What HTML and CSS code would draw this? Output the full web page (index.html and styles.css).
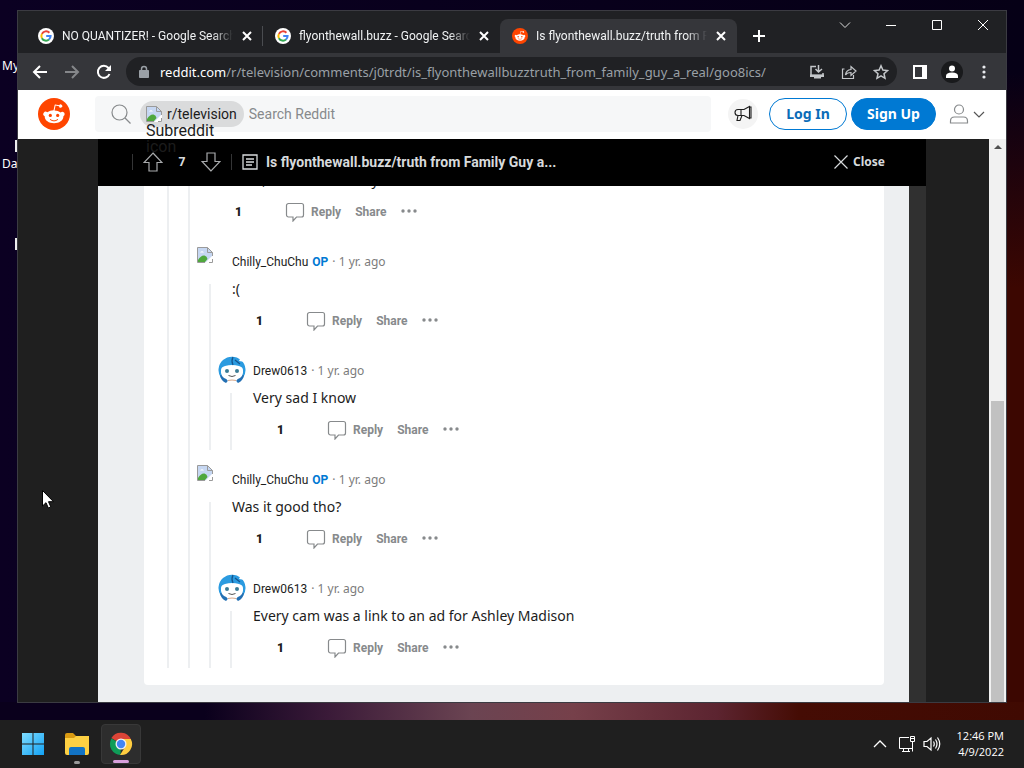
FILE: index.html
```html
<!DOCTYPE html>
<html lang="en">
<head>
    <meta charset="UTF-8">
    <meta name="viewport" content="width=device-width, initial-scale=1.0">
    <title>Desktop</title>
    <link rel="stylesheet" href="styles.css">
</head>
<body>
    <!-- shared icons -->
    <svg class="sprite" width="0" height="0" aria-hidden="true">
        <symbol id="google" viewBox="0 0 16 16">
            <circle cx="8" cy="8" r="8" fill="#fff"/>
            <g fill="none" stroke-width="2">
                <path d="M11.4 4.8A4.6 4.6 0 0 0 3.9 5.9" stroke="#ea4335"/>
                <path d="M3.9 5.9a4.6 4.6 0 0 0 0 4.3" stroke="#fbbc05"/>
                <path d="M3.9 10.2a4.6 4.6 0 0 0 7.1 1.3" stroke="#34a853"/>
                <path d="M11 11.5a4.6 4.6 0 0 0 1.6-3.4H8.2" stroke="#4285f4"/>
            </g>
        </symbol>
        <symbol id="reddit" viewBox="0 0 20 20">
            <circle cx="10" cy="10" r="10" fill="#ff4500"/>
            <path fill="#fff" d="M16.67 10a1.46 1.46 0 0 0-2.47-1 7.12 7.12 0 0 0-3.85-1.23l.65-3.12 2.14.45a1 1 0 1 0 .13-.61l-2.45-.49a.31.31 0 0 0-.37.24l-.74 3.47a7.14 7.14 0 0 0-3.9 1.23 1.46 1.46 0 1 0-1.61 2.39 2.87 2.87 0 0 0 0 .44c0 2.24 2.61 4.06 5.83 4.06s5.83-1.82 5.83-4.06a2.87 2.87 0 0 0 0-.44 1.46 1.46 0 0 0 .81-1.33z"/>
            <circle cx="7.7" cy="10.9" r="1" fill="#ff4500"/>
            <circle cx="12.3" cy="10.9" r="1" fill="#ff4500"/>
            <path fill="none" stroke="#ff4500" stroke-width=".6" stroke-linecap="round" d="M7.7 13.5a3.8 3.8 0 0 0 4.6 0"/>
        </symbol>
        <symbol id="cross" viewBox="0 0 10 10">
            <path d="M1 1l8 8M9 1L1 9" fill="none" stroke="currentColor"/>
        </symbol>
        <symbol id="broken" viewBox="0 0 16 16">
            <path d="M.5.5h10l5 5v5l-5 5H.5z" fill="#c6d7f2"/>
            <path d="M1 15V13q3-5 6.500-4.500Q10 9 10.500 12L8 15z" fill="#4fa83d"/>
            <path d="M3 5.500q2-2.500 4 0z" fill="#fff"/>
            <path d="M8 16l8-8v8z" fill="#fff"/>
            <path d="M8 15.500H.5V.5h10l5 5V9M10.500.5v5h5M12 15.500h3.500V12" fill="none" stroke="#9a9a9a"/>
        </symbol>
        <symbol id="bubble" viewBox="0 0 20 20">
            <path d="M3.500 1.500h13a2 2 0 0 1 2 2v9.500a2 2 0 0 1-2 2h-5L8 19v-4H3.500a2 2 0 0 1-2-2V3.500a2 2 0 0 1 2-2z" fill="none" stroke="#878a8c" stroke-width="1.200"/>
        </symbol>
        <symbol id="dots" viewBox="0 0 18 4">
            <g fill="#878a8c"><circle cx="3" cy="2" r="1.700"/><circle cx="9" cy="2" r="1.700"/><circle cx="15" cy="2" r="1.700"/></g>
        </symbol>
        <symbol id="snoo" viewBox="0 0 28 28">
            <path d="M3 22A13.500 13.500 0 1 1 25 22z" fill="#2b9be0"/>
            <path d="M2 19q1 6 6 8l2-2-5-6zM26 19q-1 6-6 8l-2-2 5-6z" fill="#2470b3"/>
            <path d="M9 28l1-4h8l1 4z" fill="#fff"/>
            <path d="M3 14q0-3 4-4 7-2 14 0 4 1 4 4v3q-1 7-11 7T3 17z" fill="#fff"/>
            <path d="M15 1q-2 4 0 8M17 4l5 4" stroke="#14568e" fill="none" stroke-width="1.300"/>
            <path d="M23 1l-2 4 6 1z" fill="#fff"/>
            <circle cx="9" cy="15" r="2" fill="#3a7c96"/>
            <circle cx="19" cy="15" r="2" fill="#3a7c96"/>
            <path d="M10.500 19.500q3.500 2 7 0" stroke="#555" fill="none"/>
            <path d="M10 24.500q4-1 8 0" stroke="#d8a88a" fill="none"/>
        </symbol>
        <symbol id="arrow" viewBox="0 0 20 20">
            <path d="M10 1l9 9.500h-5V19H6v-8.500H1z" fill="none" stroke="#a8aaac" stroke-width="1.200"/>
        </symbol>
    </svg>

    <main class="desktop">
        <span class="shortcut shortcut-my">My</span>
        <span class="shortcut shortcut-da">Da</span>
        <i class="chip chip-a"></i>
        <i class="chip chip-b"></i>

        <section class="window">
            <div class="tabstrip">
                <div class="tab">
                    <svg class="favicon"><use href="#google"/></svg>
                    <span class="tab-title">NO QUANTIZER! - Google Search</span>
                    <button class="tab-close" aria-label="Close tab"><svg><use href="#cross"/></svg></button>
                </div>
                <div class="tab">
                    <svg class="favicon"><use href="#google"/></svg>
                    <span class="tab-title">flyonthewall.buzz - Google Search</span>
                    <button class="tab-close" aria-label="Close tab"><svg><use href="#cross"/></svg></button>
                </div>
                <div class="tab active">
                    <svg class="favicon"><use href="#reddit"/></svg>
                    <span class="tab-title">Is flyonthewall.buzz/truth from F</span>
                    <button class="tab-close" aria-label="Close tab"><svg><use href="#cross"/></svg></button>
                </div>
                <button class="new-tab" aria-label="New tab"><svg width="12" height="12" viewBox="0 0 12 12"><path d="M6 0v12M0 6h12" stroke="#fff" stroke-width="2"/></svg></button>
                <div class="caption">
                    <button aria-label="Search tabs"><svg width="12" height="12" viewBox="0 0 12 12"><path d="M1 3.500l5 5 5-5" fill="none" stroke="#ddd"/></svg></button>
                    <button aria-label="Minimize"><svg width="12" height="12" viewBox="0 0 12 12"><path d="M1 6.500h10" stroke="#fff"/></svg></button>
                    <button aria-label="Maximize"><svg width="12" height="12" viewBox="0 0 12 12"><path d="M1.500 1.500h9v9h-9z" fill="none" stroke="#fff"/></svg></button>
                    <button aria-label="Close"><svg width="12" height="12" viewBox="0 0 12 12"><path d="M1 1l10 10M11 1L1 11" stroke="#fff"/></svg></button>
                </div>
            </div>

            <div class="toolbar">
                <button class="tool" aria-label="Back"><svg width="16" height="16" viewBox="0 0 16 16"><path d="M15 8H2M8 2L2 8l6 6" fill="none" stroke="#fff" stroke-width="2"/></svg></button>
                <button class="tool" aria-label="Forward"><svg width="16" height="16" viewBox="0 0 16 16"><path d="M1 8h13M8 2l6 6-6 6" fill="none" stroke="#85878a" stroke-width="2"/></svg></button>
                <button class="tool" aria-label="Reload"><svg width="16" height="16" viewBox="0 0 16 16"><path d="M13.500 10A6 6 0 1 1 12.500 4L14 5.500" fill="none" stroke="#fff" stroke-width="2"/><path d="M15 1v6H9z" fill="#fff"/></svg></button>
                <div class="omnibox">
                    <svg width="12" height="14" viewBox="0 0 12 14"><path d="M2 5.500h8.500v7H1.500v-7z" fill="#9aa0a6" stroke="#9aa0a6"/><path d="M3.500 6V4a2.500 2.500 0 0 1 5 0v2" fill="none" stroke="#9aa0a6" stroke-width="1.500"/></svg>
                    <span class="url"><b>reddit.com</b>/r/television/comments/j0trdt/is_flyonthewallbuzztruth_from_family_guy_a_real/goo8ics/</span>
                    <button class="tool" aria-label="Install"><svg width="16" height="16" viewBox="0 0 16 16"><path d="M7 2.500H2v9h12V9M9.500 1v6.500M6.500 5l3 3 3.500-3" fill="none" stroke="#c4c7ca" stroke-width="1.500"/><path d="M1 10.500h14V13h-3v1.500H5V13H1z" fill="#c4c7ca"/></svg></button>
                    <button class="tool" aria-label="Share"><svg width="16" height="16" viewBox="0 0 16 16"><path d="M3.500 5H1.500v9.500h11V11M4.500 11q.5-5 5.500-5.500V2.500l5 4.500-5 4.500V8.500q-4 0-5.500 2.500z" fill="none" stroke="#c4c7ca" stroke-width="1.200"/></svg></button>
                    <button class="tool" aria-label="Bookmark"><svg width="16" height="16" viewBox="0 0 16 16"><path d="M8 1.800l1.900 4.300 4.600.5-3.500 3.100 1 4.600-4-2.400-4 2.400 1-4.600-3.500-3.100 4.600-.5z" fill="none" stroke="#c4c7ca" stroke-width="1.500"/></svg></button>
                </div>
                <button class="tool panel" aria-label="Side panel"><svg width="14" height="14" viewBox="0 0 14 14"><path d="M1 1h12v12H1z" fill="none" stroke="#fff" stroke-width="2"/><path d="M9 1h4v12H9z" fill="#fff"/></svg></button>
                <button class="tool profile" aria-label="Profile"><svg width="22" height="22" viewBox="0 0 22 22"><circle cx="11" cy="11" r="11" fill="#191a1c"/><circle cx="11" cy="7.500" r="3" fill="#fff"/><path d="M5 17v-2q0-3.500 6-3.500t6 3.500v2z" fill="#fff"/></svg></button>
                <button class="tool" aria-label="Menu"><svg width="4" height="14" viewBox="0 0 4 14"><g fill="#e8eaed"><circle cx="2" cy="2" r="1.600"/><circle cx="2" cy="7" r="1.600"/><circle cx="2" cy="12" r="1.600"/></g></svg></button>
            </div>

            <header class="site-header">
                <a href="#" class="logo" aria-label="Home"><svg width="32" height="32"><use href="#reddit"/></svg></a>
                <div class="search">
                    <svg width="20" height="20" viewBox="0 0 20 20"><circle cx="8.500" cy="8.500" r="7.500" fill="none" stroke="#878a8c" stroke-width="1.200"/><path d="M14 14l5.500 5.500" stroke="#878a8c" stroke-width="1.200"/></svg>
                    <span class="sub-pill">
                        <svg width="16" height="16"><use href="#broken"/></svg>
                        <span>r/television</span>
                        <span class="alt">Subreddit icon</span>
                    </span>
                    <input type="search" placeholder="Search Reddit" aria-label="Search Reddit">
                </div>
                <button class="promo" aria-label="Advertise"><svg width="18" height="18" viewBox="0 0 18 18"><path d="M15.500 1.500v12L10 10.500H4a3 3 0 0 1 0-6h6zM7 4.500v6M4 10.500l-1 5h3l2-5M15.500 2h1.500v11h-1.500" fill="none" stroke="#1c1c1c" stroke-width="1.100"/></svg></button>
                <button class="btn">Log In</button>
                <button class="btn btn-fill">Sign Up</button>
                <button class="user" aria-label="User menu">
                    <svg width="20" height="20" viewBox="0 0 20 20"><circle cx="10" cy="5.500" r="4.500" fill="none" stroke="#878a8c" stroke-width="1.200"/><path d="M1.500 19v-2q0-4 4-4h9q4 0 4 4v2z" fill="none" stroke="#878a8c" stroke-width="1.200"/></svg>
                    <svg width="12" height="12" viewBox="0 0 12 12"><path d="M1 4l5 5 5-5" fill="none" stroke="#555" stroke-width="1.200"/></svg>
                </button>
            </header>

            <div class="viewport">
                <div class="post">
                    <div class="post-bar">
                        <div class="votes">
                            <button aria-label="Upvote"><svg width="20" height="20"><use href="#arrow"/></svg></button>
                            <b>7</b>
                            <button class="down" aria-label="Downvote"><svg width="20" height="20"><use href="#arrow"/></svg></button>
                        </div>
                        <svg width="16" height="16" viewBox="0 0 16 16"><path d="M1 1h14v14H1zM4 5h8M4 8h8M4 11h6" fill="none" stroke="#d7dadc" stroke-width="1.300"/></svg>
                        <h1>Is flyonthewall.buzz/truth from Family Guy a...</h1>
                        <button class="close"><svg width="16" height="16" viewBox="0 0 16 16"><path d="M1.500 1.500l13 13M14.500 1.500l-13 13" stroke="#d7dadc" stroke-width="1.200"/></svg>Close</button>
                    </div>
                    <div class="post-body">
                        <div class="card">
                            <div class="comment open">
                                <div class="comment open">
                                    <p>It's fake, so unfortunately</p>
                                    <div class="actions">
                                        <b>1</b>
                                        <button><svg width="20" height="20"><use href="#bubble"/></svg>Reply</button>
                                        <button>Share</button>
                                        <button class="more" aria-label="More"><svg width="18" height="4"><use href="#dots"/></svg></button>
                                    </div>

                                    <article class="comment">
                                        <div class="meta">
                                            <svg class="missing" width="16" height="16"><use href="#broken"/></svg>
                                            <a href="#">Chilly_ChuChu</a><span class="op">OP</span><span class="time">· 1 yr. ago</span>
                                        </div>
                                        <p>:(</p>
                                        <div class="actions">
                                            <b>1</b>
                                            <button><svg width="20" height="20"><use href="#bubble"/></svg>Reply</button>
                                            <button>Share</button>
                                            <button class="more" aria-label="More"><svg width="18" height="4"><use href="#dots"/></svg></button>
                                        </div>
                                        <article class="comment">
                                            <div class="meta">
                                                <svg class="avatar" width="28" height="28"><use href="#snoo"/></svg>
                                                <a href="#">Drew0613</a><span class="time">· 1 yr. ago</span>
                                            </div>
                                            <p>Very sad I know</p>
                                            <div class="actions">
                                                <b>1</b>
                                                <button><svg width="20" height="20"><use href="#bubble"/></svg>Reply</button>
                                                <button>Share</button>
                                                <button class="more" aria-label="More"><svg width="18" height="4"><use href="#dots"/></svg></button>
                                            </div>
                                        </article>
                                    </article>

                                    <article class="comment">
                                        <div class="meta">
                                            <svg class="missing" width="16" height="16"><use href="#broken"/></svg>
                                            <a href="#">Chilly_ChuChu</a><span class="op">OP</span><span class="time">· 1 yr. ago</span>
                                        </div>
                                        <p>Was it good tho?</p>
                                        <div class="actions">
                                            <b>1</b>
                                            <button><svg width="20" height="20"><use href="#bubble"/></svg>Reply</button>
                                            <button>Share</button>
                                            <button class="more" aria-label="More"><svg width="18" height="4"><use href="#dots"/></svg></button>
                                        </div>
                                        <article class="comment">
                                            <div class="meta">
                                                <svg class="avatar" width="28" height="28"><use href="#snoo"/></svg>
                                                <a href="#">Drew0613</a><span class="time">· 1 yr. ago</span>
                                            </div>
                                            <p>Every cam was a link to an ad for Ashley Madison</p>
                                            <div class="actions">
                                                <b>1</b>
                                                <button><svg width="20" height="20"><use href="#bubble"/></svg>Reply</button>
                                                <button>Share</button>
                                                <button class="more" aria-label="More"><svg width="18" height="4"><use href="#dots"/></svg></button>
                                            </div>
                                        </article>
                                    </article>
                                </div>
                            </div>
                        </div>
                    </div>
                </div>
                <div class="scrollbar">
                    <svg width="8" height="4" viewBox="0 0 8 4"><path d="M0 4l4-4 4 4z" fill="#505050"/></svg>
                    <div class="thumb"></div>
                </div>
            </div>
        </section>

        <svg class="cursor" width="12" height="19" viewBox="0 0 12 19"><path d="M.5.5v15.500l3.500-3.300 2.300 5.300 2.500-1.100-2.300-5.200h5z" fill="#fff" stroke="#000"/></svg>
    </main>

    <footer class="taskbar">
        <button class="app" aria-label="Start">
            <svg width="24" height="24" viewBox="0 0 24 24">
                <defs><linearGradient id="win" x2="1" y2="1"><stop stop-color="#7fdcff"/><stop offset="1" stop-color="#12a2f5"/></linearGradient></defs>
                <path d="M1 1h10.500v10.500H1zM12.500 1H23v10.500H12.500zM1 12.500h10.500V23H1zM12.500 12.500H23V23H12.500z" fill="url(#win)"/>
            </svg>
        </button>
        <button class="app running" aria-label="File Explorer">
            <svg width="24" height="24" viewBox="0 0 24 24">
                <path d="M0 3q0-2 2-2h6l3 3v5H0z" fill="#d99a12"/>
                <path d="M0 6h9l2-2h13v17q0 2-2 2H2q-2 0-2-2z" fill="#fdd043"/>
                <path d="M4 23v-6q0-2 2-2h12q2 0 2 2v6z" fill="#1273c4"/>
            </svg>
        </button>
        <button class="app current" aria-label="Chrome">
            <svg width="24" height="24" viewBox="0 0 24 24">
                <path d="M12 12L2.400 6A11 11 0 0 1 22 7.500z" fill="#db4437"/>
                <path d="M12 12L2.400 6.500A11 11 0 0 0 11.500 23z" fill="#0f9d58"/>
                <path d="M12 12V7h9.800A11 11 0 0 1 11 23l5-8z" fill="#ffcd40"/>
                <circle cx="12" cy="12" r="5.500" fill="#f1f1f1"/>
                <circle cx="12" cy="12" r="4.200" fill="#4285f4"/>
            </svg>
        </button>
        <div class="tray">
            <svg width="14" height="8" viewBox="0 0 14 8"><path d="M1 7l6-6 6 6" fill="none" stroke="#fff" stroke-width="1.300"/></svg>
            <svg class="net" width="16" height="16" viewBox="0 0 16 16"><path d="M10 1.500H.5v11H13M4.500 12.500v3M9.500 12.500v3M3 15.500h8M11.500.5h4v5h-4zM13.500 5.500v10M11.500 2.500h4" fill="none" stroke="#fff"/></svg>
            <svg width="18" height="16" viewBox="0 0 18 16"><path d="M1 5.500h3l4-3.500v12l-4-3.500H1zM10.500 5.500q1.500 2.500 0 5M12.500 3.500q3 4.500 0 9M14.500 1.500q4.500 6.500 0 13" fill="none" stroke="#fff" stroke-width="1.200"/></svg>
            <div class="clock"><div>12:46 PM</div><div>4/9/2022</div></div>
        </div>
    </footer>
</body>
</html>
```
FILE: styles.css
```css
* {
    box-sizing: border-box;
}
body {
    margin: 0;
    height: 100vh;
    display: flex;
    flex-direction: column;
    overflow: hidden;
    font-family: "Noto Sans", sans-serif;
    font-size: 14px;
    color: #1c1c1c;
}
button {
    padding: 0;
    border: none;
    background: none;
    font: inherit;
    color: inherit;
    display: flex;
    align-items: center;
    justify-content: center;
}
a {
    color: inherit;
    text-decoration: none;
}
svg {
    flex: none;
    display: block;
}
.sprite {
    position: absolute;
}

/* desktop */
.desktop {
    flex: 1;
    position: relative;
    min-height: 0;
    background:
        linear-gradient(90deg, #0a001c 20%, #3a1a38 32%, #6b4452 46%, #76404a 56%, #5c2430 70%, #450c04 78%, #400a02) bottom / 100% 18px no-repeat,
        linear-gradient(90deg, transparent 50%, #3c0701) bottom / 100% 60% no-repeat,
        linear-gradient(transparent 10%, #3c0701 40%) right / 18px 100% no-repeat,
        linear-gradient(90deg, #0b0022, #060016);
}
.shortcut {
    position: absolute;
    font-size: 12px;
    line-height: 16px;
    color: #fff;
}
.shortcut-my {
    left: 2px;
    top: 58px;
}
.shortcut-da {
    left: 2px;
    top: 156px;
}
.chip {
    position: absolute;
    left: 15px;
    width: 4px;
    height: 12px;
    background: #eee;
}
.chip-a {
    top: 140px;
}
.chip-b {
    top: 238px;
}
.cursor {
    position: absolute;
    left: 42px;
    top: 490px;
}

/* browser window */
.window {
    position: absolute;
    inset: 10px 17px 17px 17px;
    border: 1px solid #3b3b42;
    display: flex;
    flex-direction: column;
    background: #202124;
}
.tabstrip {
    display: flex;
    height: 42px;
    padding: 8px 0 0 8px;
    font-family: Roboto, sans-serif;
    font-size: 12px;
    color: #f1f3f4;
}
.tab {
    flex: 0 1 237px;
    min-width: 0;
    display: flex;
    align-items: center;
    gap: 8px;
    padding: 0 10px 0 12px;
    border-radius: 8px 8px 0 0;
}
.tab:first-child {
    border-right: 1px solid #4a4c50;
    border-radius: 0;
    height: 20px;
    margin-top: 7px;
    padding-right: 9px;
}
.tab.active {
    background: #35363a;
}
.favicon {
    width: 16px;
    height: 16px;
}
.tab-title {
    flex: 1;
    min-width: 0;
    overflow: hidden;
    white-space: nowrap;
    mask-image: linear-gradient(90deg, #000 88%, transparent);
}
.tab-close {
    width: 12px;
    height: 16px;
    color: #fff;
}
.tab-close svg {
    width: 10px;
    height: 10px;
    stroke-width: 2;
}
.new-tab {
    width: 28px;
    margin-left: 8px;
}
.caption {
    display: flex;
    align-self: flex-start;
    margin-left: auto;
    margin-top: -8px;
}
.caption button {
    width: 46px;
    height: 28px;
}
.toolbar {
    display: flex;
    align-items: center;
    height: 37px;
    padding: 0 6px;
    background: #35363a;
}
.tool {
    width: 32px;
    height: 28px;
}
.omnibox {
    flex: 1;
    min-width: 0;
    display: flex;
    align-items: center;
    height: 29px;
    margin: 0 7px 0 6px;
    padding-left: 12px;
    border-radius: 15px;
    background: #202124;
}
.url {
    flex: 1;
    min-width: 0;
    margin-left: 10px;
    overflow: hidden;
    white-space: nowrap;
    font-size: 13px;
    color: #9aa0a6;
}
.url b {
    font-weight: 400;
    color: #fff;
}

/* site header */
.site-header {
    position: relative;
    z-index: 2;
    display: flex;
    align-items: center;
    height: 49px;
    padding: 0 21px 2px 20px;
    background: #fff;
}
.logo {
    margin-right: 25px;
}
.search {
    flex: 1;
    min-width: 0;
    display: flex;
    align-items: center;
    height: 36px;
    padding-left: 16px;
    border-radius: 4px;
    background: #f6f7f8;
}
.sub-pill {
    position: relative;
    display: flex;
    align-items: center;
    gap: 5px;
    height: 26px;
    margin-left: 9px;
    padding: 0 7px 0 6px;
    border-radius: 13px;
    background: #dadbdc;
    font-family: Roboto, sans-serif;
    white-space: nowrap;
}
.alt {
    position: absolute;
    left: 6px;
    top: 22px;
    font-size: 16px;
    line-height: 16px;
    width: 74px;
    white-space: normal;
}
.search input {
    flex: 1;
    min-width: 0;
    padding: 0 5px;
    border: none;
    outline: none;
    background: none;
    font: 14px Roboto, sans-serif;
}
.search input::placeholder {
    color: #878a8c;
}
.promo {
    width: 30px;
    height: 30px;
    margin: 0 11px 0 17px;
    border-radius: 15px;
    background: #f4f4f4;
}
.btn {
    width: 78px;
    height: 32px;
    border: 1px solid #0079d3;
    border-radius: 16px;
    font-weight: 700;
    color: #0b6cb8;
}
.btn-fill {
    width: 85px;
    margin-left: 4px;
    background: #0079d3;
    color: #fff;
}
.user {
    gap: 4px;
    margin-left: 13px;
}

/* post overlay */
.viewport {
    flex: 1;
    min-height: 0;
    display: flex;
    background: #1f1f1f;
}
.post {
    flex: 1;
    min-width: 0;
    display: flex;
    flex-direction: column;
    margin: 0 63px 0 80px;
}
.post-bar {
    flex: none;
    display: flex;
    align-items: center;
    gap: 8px;
    height: 47px;
    padding: 0 41px 2px 34px;
    background: #000;
    color: #d7dadc;
}
.votes {
    display: flex;
    align-items: center;
    justify-content: space-between;
    width: 100px;
    height: 16px;
    margin-right: 2px;
    padding: 0 10px;
    border: solid #343536;
    border-width: 0 1px;
    font-size: 12px;
}
.down {
    transform: rotate(180deg);
}
.post-bar h1 {
    flex: 1;
    margin: 0;
    font: 700 14px Roboto, sans-serif;
}
.close {
    gap: 4px;
    font-size: 12px;
    font-weight: 700;
}
.post-body {
    flex: 1;
    min-height: 0;
    display: flex;
    flex-direction: column;
    border-right: 17px solid #303030;
    padding: 0 25px 17px 46px;
    background: #edeff1;
}
.card {
    flex: 1;
    min-height: 0;
    overflow: hidden;
    display: flex;
    flex-direction: column;
    justify-content: flex-end;
    padding: 0 11px 17px;
    border-radius: 0 0 4px 4px;
    background: #fff;
}

/* comments */
.comment {
    position: relative;
    margin-top: 15px;
}
.comment::before {
    content: "";
    position: absolute;
    left: 12px;
    top: 37px;
    bottom: 0;
    width: 2px;
    background: #edeff1;
}
.comment .comment {
    margin-left: 21px;
}
.comment.open {
    margin-top: 0;
}
.comment.open::before {
    top: 0;
}
.meta {
    display: flex;
    align-items: center;
    gap: 4px;
    height: 28px;
    font-family: Roboto, sans-serif;
    font-size: 12px;
    line-height: 16px;
}
.meta a,
.meta span {
    padding-top: 2px;
}
.missing {
    align-self: flex-start;
    margin-right: 15px;
}
.avatar {
    margin-right: 3px;
}
.op {
    font-weight: 700;
    color: #0079d3;
}
.time {
    font-family: "Noto Sans", sans-serif;
    color: #7c7c7c;
}
.comment p {
    margin: 3px 0 10px 35px;
    line-height: 21px;
}
.actions {
    display: flex;
    align-items: center;
    gap: 14px;
    height: 32px;
    padding: 0 0 8px 59px;
    font-family: Roboto, sans-serif;
    font-size: 12px;
    font-weight: 700;
    color: #878a8c;
}
.actions b {
    width: 36px;
    color: #1c1c1c;
}
.actions button {
    gap: 6px;
}
.actions .more {
    padding-bottom: 3px;
}

/* scrollbar */
.scrollbar {
    display: flex;
    flex-direction: column;
    align-items: center;
    justify-content: space-between;
    width: 17px;
    padding-top: 6px;
    background: #f1f1f1;
}
.thumb {
    width: 13px;
    height: 54%;
    background: #c1c1c1;
}

/* taskbar */
.taskbar {
    display: flex;
    align-items: center;
    gap: 4px;
    height: 48px;
    padding: 0 20px 0 13px;
    background: #1f1f1f;
    color: #fff;
}
.app {
    position: relative;
    width: 40px;
    height: 40px;
    border-radius: 4px;
}
.current {
    background: #2d2d2d;
    border: 1px solid #383838;
}
.running::after,
.current::after {
    content: "";
    position: absolute;
    bottom: 0;
    width: 6px;
    height: 3px;
    border-radius: 2px;
    background: #9a9a9a;
}
.current::after {
    width: 16px;
    background: #d8a0dc;
}
.tray {
    display: flex;
    align-items: center;
    gap: 8px;
    margin-left: auto;
}
.net {
    margin-left: 4px;
}
.clock {
    margin-left: 8px;
    font-family: "Open Sans", sans-serif;
    font-size: 11px;
    line-height: 16px;
    text-align: right;
}
```
